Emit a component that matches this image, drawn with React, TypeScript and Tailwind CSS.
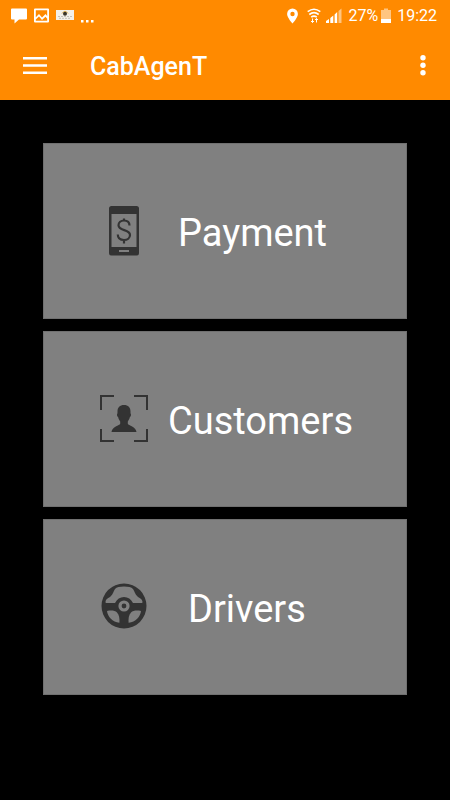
import type { ReactNode } from 'react'

function StatusBar() {
  return (
    <div className="flex h-8 items-center justify-between pl-[11px] pr-[13px]">
      <div className="flex items-center gap-[7px]">
        <svg width="16" height="16" viewBox="0 0 16 16" fill="white">
          <path d="M1 .5h14q1 0 1 1v9q0 1-1 1H8L3.500 15.500v-4H1q-1 0-1-1v-9q0-1 1-1z" />
        </svg>
        <svg width="15" height="16" viewBox="0 0 15 16">
          <path
            fill="white"
            fillRule="evenodd"
            d="M1 .5h13q1 0 1 1v12q0 1-1 1H1q-1 0-1-1v-12q0-1 1-1zM1.800 2.300v7L5 6l3 3.500L11.500 6l1.700 2V2.300zM1.800 11.500v1.200h11.400v-2l-1.700-2L8 12 5 8.500z"
          />
        </svg>
        <svg width="18" height="16" viewBox="0 0 18 16">
          <rect y="2" width="18" height="10" fill="#f3efe9" />
          <path d="M6 5.500q3-4.500 6 0" fill="none" stroke="#e0b050" />
          <circle cx="9" cy="5.800" r="2" fill="#3a3428" />
          <path d="M2 8.500h14M3 10.300h12" stroke="#b8b4ac" strokeWidth=".8" strokeDasharray="2 1" />
        </svg>
        <svg width="14" height="16" viewBox="0 0 14 16" fill="white">
          <rect x="0" y="12" width="2.500" height="2.500" />
          <rect x="5" y="12" width="2.500" height="2.500" />
          <rect x="10" y="12" width="2.500" height="2.500" />
        </svg>
      </div>
      <div className="flex items-center text-base leading-5 text-white">
        <svg className="mr-[9px]" width="11" height="16" viewBox="0 0 11 16" fill="white">
          <path
            fillRule="evenodd"
            d="M5.500.5a5.400 5.400 0 0 1 5.400 5.400C10.900 9.500 5.500 15.500 5.500 15.500S.1 9.500.1 5.900A5.400 5.400 0 0 1 5.500.5zm0 3.300a2.200 2.200 0 1 0 0 4.400 2.200 2.200 0 0 0 0-4.400z"
          />
        </svg>
        <svg className="mr-[5px]" width="14" height="16" viewBox="0 0 14 16" fill="none" stroke="white" strokeWidth="1.600">
          <path d="M.7 3.700q6.300-5 12.600 0M2.300 6.500q4.700-3.700 9.400 0M4.200 9.200q2.800-2.200 5.600 0" />
          <path d="M5.500 10.500v4M4 13l1.500 1.500L7 13M9.500 14.500v-4M8 12l1.500-1.500L11 12" strokeWidth="1" />
        </svg>
        <svg className="mr-[6px]" width="16" height="16" viewBox="0 0 16 16" fill="white">
          <path d="M0 15v-2l3-2v4zM4.300 15v-5l3-2.500V15zM8.600 15V6.500L11.200 4v11z" />
          <path d="M12.500 15V3L15.500.5V15z" opacity=".5" />
        </svg>
        <span>27%</span>
        <svg className="ml-[3px] mr-[6px]" width="10" height="16" viewBox="0 0 10 16" fill="white">
          <path d="M3 .5h4V2h3v9H0V2h3z" opacity=".5" />
          <path d="M0 11h10v4H0z" />
        </svg>
        <span>19:22</span>
      </div>
    </div>
  )
}

function PhoneIcon() {
  return (
    <svg width="48" height="52" viewBox="0 0 48 52">
      <path
        fill="#333"
        fillRule="evenodd"
        d="M11.500 1h25q2.500 0 2.500 2.500v44.500q0 2.500-2.500 2.500h-25Q9 50.500 9 48V3.500Q9 1 11.500 1zM11.500 9v33h25V9zM19 45v2h10v-2z"
      />
      <path
        d="M29.500 20.500c0-3.200-2.300-5-5.500-5s-5.500 1.900-5.500 4.700c0 6.200 11.500 3.600 11.500 9.800 0 3-2.600 5-6 5-3.700 0-6.200-2-6.200-5.500M24 13.500v2.500M24 35v3.500"
        fill="none"
        stroke="#333"
        strokeWidth="2.200"
      />
    </svg>
  )
}

function PersonFrameIcon() {
  return (
    <svg width="48" height="52" viewBox="0 1 48 52">
      <path
        d="M1 18V4h13M34 4h13v14M47 37v12H34M14 49H1V37"
        fill="none"
        stroke="#333"
        strokeWidth="2"
      />
      <path
        fill="#333"
        d="M24 13c4.200 0 6.500 2.600 6.500 6.500 0 1.200 0 1.700.2 2.200.7.800.2 2.900-.8 3.400-.5 2-1.200 3.400-2.100 4.400v2.200c.6 2 8.300 2.700 8.700 8.300h-25c.4-5.600 8.100-6.300 8.700-8.300v-2.200c-.9-1-1.600-2.400-2.100-4.400-1-.5-1.500-2.600-.8-3.400.2-.5.200-1 .2-2.200 0-3.900 2.300-6.500 6.500-6.500z"
      />
    </svg>
  )
}

function WheelIcon() {
  return (
    <svg width="48" height="52" viewBox="0 1 48 52">
      <circle cx="24" cy="26" r="22.500" fill="#333" />
      <g fill="#808080">
        <path d="M24 6.500c4 0 7.500.7 9 2.500 1.500 2 2 5.500 4.500 7.500s4.500 2 5 5.500c0 .7-.3 1-1 1h-8.500c-2-4-5-6-9-6s-7 2-9 6H6.500c-.7 0-1-.3-1-1 .5-3.500 2.500-3.500 5-5.500S13.500 11 15 9c1.500-1.800 5-2.500 9-2.500z" />
        <path d="M7 31c4-1 8-.5 10 1.500 2.200 2.400 2.800 6.500 2.400 10.300C12.500 42 7.500 36.500 7 31z" />
        <path d="M41 31c-4-1-8-.5-10 1.500-2.200 2.400-2.800 6.500-2.400 10.300C35.500 42 40.500 36.500 41 31z" />
      </g>
      <circle cx="24" cy="26" r="4" fill="#333" stroke="#808080" strokeWidth="3.200" />
    </svg>
  )
}

interface MenuCardProps {
  title: string;
  icon: ReactNode;
  labelClass: string;
}

function MenuCard({ title, icon, labelClass }: MenuCardProps) {
  return (
    <button type="button" className="flex h-[176px] w-full items-center border border-[#707070] bg-[#808080] pl-14">
      {icon}
      <span className={`pt-1 text-[38px] leading-[44px] text-white ${labelClass}`}>{title}</span>
    </button>
  )
}

export default function App() {
  return (
    <div className="min-h-screen bg-black font-['Roboto',sans-serif]">
      <header className="bg-[#ff8a00]">
        <StatusBar />
        <div className="flex h-[68px] items-center pl-[23px] pr-[19px]">
          <button type="button" aria-label="Open menu">
            <svg width="24" height="18" viewBox="0 0 24 18" fill="white">
              <path d="M0 0h24v2.500H0zM0 7.200h24v2.500H0zM0 14.400h24v2.500H0z" />
            </svg>
          </button>
          <h1 className="ml-[43px] flex-1 pt-0.5 text-[25px] font-medium leading-8 text-white">CabAgenT</h1>
          <button type="button" aria-label="More options">
            <svg width="16" height="22" viewBox="0 0 16 22" fill="white">
              <circle cx="8" cy="2.700" r="2.700" />
              <circle cx="8" cy="10.200" r="2.700" />
              <circle cx="8" cy="17.700" r="2.700" />
            </svg>
          </button>
        </div>
      </header>
      <main className="flex flex-col gap-3 px-[43px] pt-[43px]">
        <MenuCard title="Payment" icon={<PhoneIcon />} labelClass="ml-[30px]" />
        <MenuCard title="Customers" icon={<PersonFrameIcon />} labelClass="ml-5" />
        <MenuCard title="Drivers" icon={<WheelIcon />} labelClass="ml-10" />
      </main>
    </div>
  )
}
